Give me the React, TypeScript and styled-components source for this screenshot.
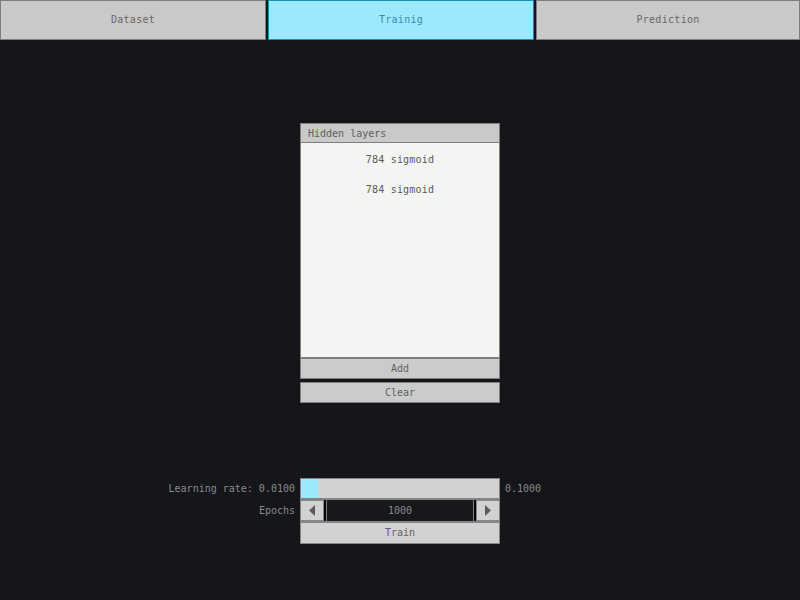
import styled, { createGlobalStyle } from 'styled-components';

const GlobalStyle = createGlobalStyle`
  html, body {
    margin: 0;
    padding: 0;
    background: #14161a;
  }
  body {
    font-family: "DejaVu Sans Mono", "Liberation Mono", monospace;
    font-size: 10px;
  }
`;

const Page = styled.div`
  width: 800px;
  height: 600px;
  display: flex;
  flex-direction: column;
`;

const TabBar = styled.div`
  display: grid;
  grid-template-columns: 266px 266px 1fr;
  column-gap: 2px;
  height: 40px;
`;

const Tab = styled.button<{ $active?: boolean }>`
  font: inherit;
  font-size: 10px;
  letter-spacing: 0.3px;
  margin: 0;
  padding: 0 0 2px;
  border: 1px solid ${(p) => (p.$active ? '#1a8cbc' : '#7e7e7e')};
  background: ${(p) => (p.$active ? '#9be8ff' : '#c9c9c9')};
  color: ${(p) => (p.$active ? '#3a8cae' : '#676767')};
  cursor: pointer;
`;

const Main = styled.div`
  display: flex;
  flex-direction: column;
  align-items: center;
  padding-top: 83px;
`;

const LayersPanel = styled.div`
  width: 198px;
  background: #7e7e7e;
  padding: 1px;
  display: flex;
  flex-direction: column;
`;

const PanelHeader = styled.div`
  height: 18px;
  line-height: 19px;
  padding-left: 7px;
  background: #c9c9c9;
  color: #5e5e5e;
  margin-bottom: 1px;
`;

const LayerList = styled.div`
  height: 214px;
  background: #f3f5f2;
  display: flex;
  flex-direction: column;
  align-items: center;
  padding-top: 11px;
  box-sizing: border-box;
  gap: 18px;
  margin-bottom: 2px;
`;

const LayerItem = styled.div`
  color: #5a5a5a;
  line-height: 12px;
  letter-spacing: 0.2px;
`;

const Button = styled.button`
  font: inherit;
  margin: 0;
  padding: 0;
  border: 0;
  height: 19px;
  background: #cbcbcb;
  color: #626262;
  cursor: pointer;
`;

const OuterButton = styled(Button)`
  width: 200px;
  height: 21px;
  border: 1px solid #7e7e7e;
  margin-top: 3px;
`;

const TrainGrid = styled.div`
  margin-top: 75px;
  width: 800px;
  display: grid;
  grid-template-columns: 1fr 200px 1fr;
  column-gap: 5px;
`;

const Labels = styled.div`
  display: flex;
  flex-direction: column;
  align-items: flex-end;
  color: #8a8a8a;
`;

const Label = styled.div<{ $h: number }>`
  height: ${(p) => p.$h}px;
  line-height: ${(p) => p.$h}px;
`;

const Controls = styled.div`
  background: #858585;
  padding: 1px;
  display: flex;
  flex-direction: column;
  gap: 2px;
`;

const Slider = styled.div`
  height: 19px;
  background: #d2d2d2;
  display: flex;
`;

const Thumb = styled.div`
  width: 17px;
  height: 19px;
  background: #9be8ff;
`;

const EpochRow = styled.div`
  height: 21px;
  display: grid;
  grid-template-columns: 22px 1fr 22px;
`;

const Arrow = styled.button`
  margin: 1px 0;
  padding: 0;
  border: 0;
  background: #d2d2d2;
  display: flex;
  align-items: center;
  justify-content: center;
  cursor: pointer;
`;

const NumberBox = styled.div`
  margin: 0 1px;
  background: #16181c;
  border-left: 2px solid #050506;
  border-right: 2px solid #050506;
  box-shadow: inset 1px 0 0 #858585, inset -1px 0 0 #858585;
  color: #8a8a8a;
  text-align: center;
  line-height: 21px;
`;

const TrainButton = styled(Button)`
  height: 20px;
  padding-bottom: 2px;
  background: #d2d2d2;
  color: #626262;
`;

const RightValue = styled.div`
  color: #8a8a8a;
  height: 22px;
  line-height: 22px;
`;

function Triangle({ dir }: { dir: 'left' | 'right' }) {
  return (
    <svg width="6" height="11" viewBox="0 0 6 11">
      {dir === 'left' ? (
        <polygon points="6,0 6,11 0,5.5" fill="#5c5c5c" />
      ) : (
        <polygon points="0,0 0,11 6,5.5" fill="#5c5c5c" />
      )}
    </svg>
  );
}

export default function App() {
  const layers = ['784 sigmoid', '784 sigmoid'];
  return (
    <Page>
      <GlobalStyle />
      <TabBar>
        <Tab>Dataset</Tab>
        <Tab $active>Trainig</Tab>
        <Tab>Prediction</Tab>
      </TabBar>
      <Main>
        <LayersPanel>
          <PanelHeader>Hidden layers</PanelHeader>
          <LayerList>
            {layers.map((l, i) => (
              <LayerItem key={i}>{l}</LayerItem>
            ))}
          </LayerList>
          <Button>Add</Button>
        </LayersPanel>
        <OuterButton>Clear</OuterButton>
        <TrainGrid>
          <Labels>
            <Label $h={22}>Learning rate: 0.0100</Label>
            <Label $h={22}>Epochs</Label>
          </Labels>
          <Controls>
            <Slider>
              <Thumb />
            </Slider>
            <EpochRow>
              <Arrow>
                <Triangle dir="left" />
              </Arrow>
              <NumberBox>1000</NumberBox>
              <Arrow>
                <Triangle dir="right" />
              </Arrow>
            </EpochRow>
            <TrainButton>Train</TrainButton>
          </Controls>
          <div>
            <RightValue>0.1000</RightValue>
          </div>
        </TrainGrid>
      </Main>
    </Page>
  );
}
